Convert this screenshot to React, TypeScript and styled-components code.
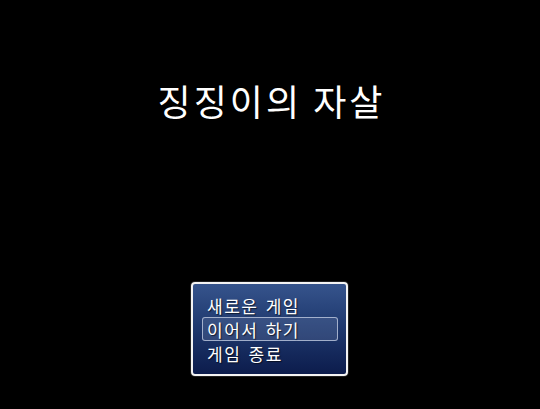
import React from 'react';
import styled, { createGlobalStyle } from 'styled-components';

const GlobalStyle = createGlobalStyle`
  html, body {
    margin: 0;
    padding: 0;
    background: #000;
  }
  body {
    font-family: "Noto Sans CJK KR", "Noto Sans", sans-serif;
  }
`;

const Screen = styled.div`
  width: 540px;
  height: 409px;
  background: #000;
  display: flex;
  flex-direction: column;
  align-items: center;
  overflow: hidden;
`;

const Title = styled.h1`
  margin: 82px 0 0;
  padding-left: 3px;
  font-size: 36px;
  line-height: 36px;
  font-weight: 400;
  color: #fff;
  letter-spacing: 3px;
  text-shadow: 1px 1px 1px rgba(0, 0, 0, 0.8);
`;

const CommandWindow = styled.div`
  margin-top: 164px;
  margin-left: -1px;
  width: 157px;
  height: 94px;
  box-sizing: border-box;
  border: 2px solid #f4f4f4;
  border-radius: 4px;
  box-shadow: 0 0 0 1px #202020;
  background: linear-gradient(to bottom, #36548c 0%, #203a70 45%, #0c1c4c 100%);
  padding: 9px 8px 0 9px;
  display: flex;
  flex-direction: column;
`;

const Command = styled.div<{ $selected?: boolean }>`
  height: 24px;
  box-sizing: border-box;
  padding-left: 4px;
  display: flex;
  align-items: center;
  font-size: 17px;
  letter-spacing: 1.5px;
  word-spacing: 2px;
  color: #fff;
  white-space: nowrap;
  border-radius: 3px;
  border: 1px solid ${p => (p.$selected ? 'rgba(200, 210, 230, 0.75)' : 'transparent')};
  background: ${p => (p.$selected ? 'rgba(120, 140, 180, 0.25)' : 'transparent')};
  text-shadow: 1px 1px 1px rgba(0, 0, 0, 0.6);
`;

const commands = ['새로운 게임', '이어서 하기', '게임 종료'];

const App: React.FC = () => {
  return (
    <>
      <GlobalStyle />
      <Screen>
        <Title>징징이의 자살</Title>
        <CommandWindow>
          {commands.map((c, i) => (
            <Command key={c} $selected={i === 1}>
              {c}
            </Command>
          ))}
        </CommandWindow>
      </Screen>
    </>
  );
};

export default App;
